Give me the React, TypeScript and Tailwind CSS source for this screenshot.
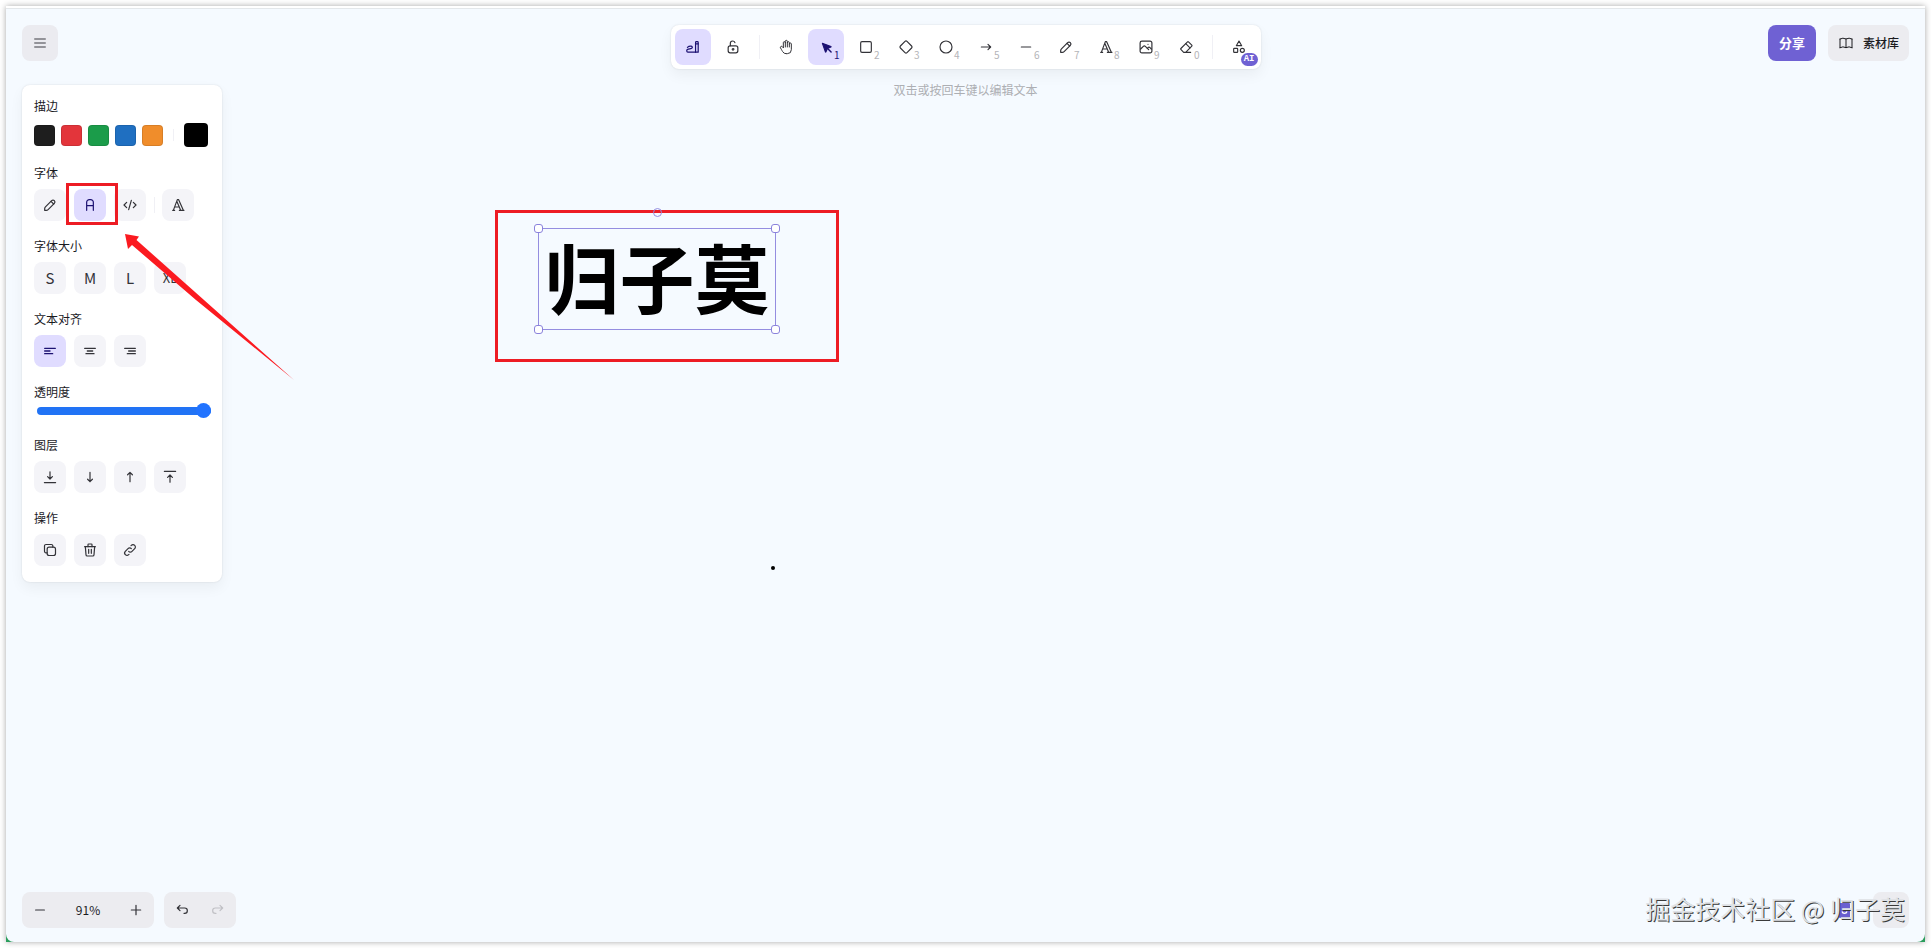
import React, { useState } from 'react';
import type { ReactNode } from 'react';
import clsx from 'clsx';

type IconProps = {
  children: ReactNode;
  box?: number;
  stroke?: number;
  className?: string;
};

function Icon({ children, box = 20, stroke = 1.5, className = 'size-4' }: IconProps) {
  return (
    <svg
      viewBox={`0 0 ${box} ${box}`}
      fill="none"
      stroke="currentColor"
      strokeWidth={stroke}
      strokeLinecap="round"
      strokeLinejoin="round"
      aria-hidden="true"
      className={className}
    >
      {children}
    </svg>
  );
}

const pencilIcon = (
  <Icon>
    <path d="m7.643 15.69 7.774-7.773a2.357 2.357 0 1 0-3.334-3.334L4.31 12.357a3.333 3.333 0 0 0-.977 2.357v1.953h1.953c.884 0 1.732-.352 2.357-.977Z" />
    <path d="m11.25 5.417 3.333 3.333" />
  </Icon>
);

const textIcon = (
  <Icon box={24} stroke={1.75}>
    <path d="M4 20h3M14 20h7M6.9 15h6.9M10.2 6.3 16 20M5 20l6-16h2l7 16" />
  </Icon>
);

const penModeIcon = (
  <Icon>
    <path d="M13.2 4.300a1 1 0 0 1 1-1h1.300a1 1 0 0 1 1 1v12.200h-3.300Z" />
    <path d="M13.200 6h3.300" />
    <path d="M3 10.500c1.500-1.300 3.200-1.700 4.700-1.500 1.800.300 2 2.200.300 2.800-1.700.500-3.500.500-4.800 1.200-1.800 1-1.200 3.500.900 3.500h9.100" />
  </Icon>
);

const lockIcon = (
  <Icon>
    <path d="M13.542 8.542H6.458a2.5 2.5 0 0 0-2.5 2.5v3.75a2.5 2.5 0 0 0 2.5 2.5h7.084a2.5 2.5 0 0 0 2.5-2.5v-3.75a2.5 2.5 0 0 0-2.5-2.5Z" />
    <path d="M10 13.958a1.042 1.042 0 1 0 0-2.083 1.042 1.042 0 0 0 0 2.083Z" />
    <path d="M6.667 8.333V5.400c0-1.600 1.300-2.900 2.916-2.900 1.300 0 2.400.700 2.817 2.100" />
  </Icon>
);

const handIcon = (
  <Icon box={24} stroke={1.5}>
    <path d="M8 13V5.500a1.500 1.500 0 0 1 3 0V12M11 5.500v-2a1.500 1.500 0 1 1 3 0V12M14 5.500a1.500 1.500 0 0 1 3 0V12" />
    <path d="M17 7.500a1.500 1.500 0 0 1 3 0V16a6 6 0 0 1-6 6h-2 .208a6 6 0 0 1-5.012-2.700L7 19c-.312-.479-1.407-2.388-3.286-5.728a1.500 1.500 0 0 1 .536-2.022 1.867 1.867 0 0 1 2.280.280L8 13" />
  </Icon>
);

const tools = [
  {
    name: '选择',
    icon: (
      <Icon box={22}>
        <g fill="currentColor">
          <path d="m6 6 4.153 11.793a.365.365 0 0 0 .331.207.366.366 0 0 0 .332-.207L13 13l4.787-1.994a.355.355 0 0 0 .213-.323.355.355 0 0 0-.213-.323L6 6Z" />
          <path d="m13.500 13.500 4.500 4.500" strokeWidth="2" />
        </g>
      </Icon>
    ),
  },
  {
    name: '矩形',
    icon: (
      <Icon box={24} stroke={1.75}>
        <rect x="4" y="4" width="16" height="16" rx="2" />
      </Icon>
    ),
  },
  {
    name: '菱形',
    icon: (
      <Icon box={24} stroke={1.75}>
        <path d="m10.500 20.400-6.900-6.900c-.781-.781-.781-2.219 0-3l6.900-6.900c.781-.781 2.219-.781 3 0l6.900 6.900c.781.781.781 2.219 0 3l-6.900 6.900c-.781.781-2.219.781-3 0Z" />
      </Icon>
    ),
  },
  {
    name: '椭圆',
    icon: (
      <Icon box={24} stroke={1.75}>
        <circle cx="12" cy="12" r="9" />
      </Icon>
    ),
  },
  {
    name: '箭头',
    icon: (
      <Icon box={24} stroke={1.75}>
        <path d="M5 12h14M15 16l4-4M15 8l4 4" />
      </Icon>
    ),
  },
  {
    name: '线条',
    icon: (
      <Icon>
        <path d="M4.167 10h11.666" />
      </Icon>
    ),
  },
  { name: '自由书写', icon: pencilIcon },
  { name: '文字', icon: textIcon },
  {
    name: '插入图像',
    icon: (
      <Icon>
        <path d="M12.500 6.667h.010" />
        <path d="M4.910 2.625h10.180a2.284 2.284 0 0 1 2.285 2.284v10.182a2.284 2.284 0 0 1-2.284 2.284H4.909a2.284 2.284 0 0 1-2.284-2.284V4.909a2.284 2.284 0 0 1 2.284-2.284Z" />
        <path d="m3.333 12.500 3.334-3.333c.773-.745 1.726-.745 2.500 0l4.166 4.166" />
        <path d="m11.667 11.667.833-.834c.774-.744 1.726-.744 2.500 0l1.667 1.667" />
      </Icon>
    ),
  },
  {
    name: '橡皮',
    icon: (
      <Icon box={24} stroke={1.75}>
        <path d="M19 20H8.500l-4.210-4.300a1 1 0 0 1 0-1.410l10-10a1 1 0 0 1 1.410 0l5 5a1 1 0 0 1 0 1.410L11.500 20" />
        <path d="M18 13.300 11.700 7" />
      </Icon>
    ),
  },
];

const swatches = [
  { name: '黑', color: 'bg-[#1e1e1e]' },
  { name: '红', color: 'bg-[#e3353b]' },
  { name: '绿', color: 'bg-[#1b9c4a]' },
  { name: '蓝', color: 'bg-[#1f6fc1]' },
  { name: '橙', color: 'bg-[#f08d2b]' },
];

const aligns = [
  { name: '左对齐', d: 'M4 8h16M4 12h8M4 16h12' },
  { name: '居中', d: 'M4 8h16M8 12h8M6 16h12' },
  { name: '右对齐', d: 'M4 8h16M10 12h10M8 16h12' },
];

const layers = [
  { name: '置于底层', d: 'M3 17h14M10 3.500v9M7 9.500l3 3 3-3' },
  { name: '下移一层', d: 'M10 4.200v11.600M7 12.800l3 3 3-3' },
  { name: '上移一层', d: 'M10 15.800V4.200M7 7.200l3-3 3 3' },
  { name: '置于顶层', d: 'M3 3h14M10 16.500v-9M7 10.500l3-3 3 3' },
];

const actions = [
  {
    name: '复制',
    paths: [
      'M14.375 6.458H8.958a2.500 2.500 0 0 0-2.500 2.500v5.417a2.500 2.500 0 0 0 2.500 2.500h5.417a2.500 2.500 0 0 0 2.500-2.500V8.958a2.500 2.500 0 0 0-2.500-2.500Z',
      'M6.458 13.542H5a1.870 1.870 0 0 1-1.875-1.875V5A1.870 1.870 0 0 1 5 3.125h6.667A1.870 1.870 0 0 1 13.542 5v1.458',
    ],
  },
  {
    name: '删除',
    paths: [
      'M3.333 5.833h13.334M8.333 9.167v5M11.667 9.167v5',
      'm4.167 5.833.833 10c0 .920.746 1.667 1.667 1.667h6.666c.920 0 1.667-.746 1.667-1.667l.833-10M7.500 5.833v-2.500c0-.460.373-.833.833-.833h3.334c.460 0 .833.373.833.833v2.500',
    ],
  },
  {
    name: '链接',
    paths: [
      'M8.333 11.667a2.917 2.917 0 0 0 4.167 0l3.333-3.334a2.946 2.946 0 1 0-4.166-4.166l-.417.416',
      'M11.667 8.333a2.917 2.917 0 0 0-4.167 0l-3.333 3.334a2.946 2.946 0 0 0 4.166 4.166l.417-.416',
    ],
  },
];

type OptionProps = {
  label: string;
  active?: boolean;
  onClick?: () => void;
  children: ReactNode;
};

function Option({ label, active, onClick, children }: OptionProps) {
  return (
    <button
      type="button"
      aria-label={label}
      onClick={onClick}
      className={clsx(
        'flex size-8 items-center justify-center rounded-lg',
        active ? 'bg-[#e0dcff] text-[#1c1172]' : 'bg-[#f4f4f8] text-[#333338]',
      )}
    >
      {children}
    </button>
  );
}

function Section({ title, children }: { title: string; children: ReactNode }) {
  return (
    <section>
      <h3 className="mb-[7px] leading-[18px]">{title}</h3>
      <div className="flex gap-2">{children}</div>
    </section>
  );
}

function Divider({ className }: { className?: string }) {
  return <div className={clsx('w-px bg-[#f0f0f5]', className)} />;
}

function StylePanel() {
  const [align, setAlign] = useState('左对齐');
  const [opacity, setOpacity] = useState(100);

  return (
    <aside className="flex w-50 flex-col gap-4 rounded-lg bg-white px-3 pt-3 pb-4 text-xs text-[#1b1b1f] shadow-[0_0_2px_rgba(0,0,0,0.12),0_6px_14px_rgba(0,0,0,0.05)]">
      <section>
        <h3 className="mb-[7px] leading-[18px]">描边</h3>
        <div className="flex h-[26px] items-center">
          <div className="flex gap-1.5">
            {swatches.map((s) => (
              <button
                key={s.name}
                type="button"
                aria-label={s.name}
                className={clsx('size-[21px] rounded-sm border border-black/10', s.color)}
              />
            ))}
          </div>
          <Divider className="mx-2.5 h-3" />
          <button type="button" aria-label="当前颜色" className="size-6 rounded-sm bg-black" />
        </div>
      </section>

      <Section title="字体">
        <Option label="手写">{pencilIcon}</Option>
        <div className="relative z-10">
          <Option label="普通" active>
            <Icon>
              <path d="M5.833 16.667v-10a3.333 3.333 0 0 1 3.334-3.334h1.666a3.333 3.333 0 0 1 3.334 3.334v10M5.833 10.833h8.334" />
            </Icon>
          </Option>
          {/* annotation frame around the chosen font */}
          <span className="pointer-events-none absolute -top-1.5 -right-3 -bottom-1 -left-2 border-3 border-[#ed1c24]" />
        </div>
        <Option label="代码">
          <Icon>
            <path d="M5.833 6.667 2.500 10l3.333 3.333M14.167 6.667 17.500 10l-3.333 3.333M11.667 4.167 8.333 15.833" />
          </Icon>
        </Option>
        <Divider className="my-2 -mr-px" />
        <Option label="更多字体">{textIcon}</Option>
      </Section>

      <Section title="字体大小">
        {['S', 'M', 'L', 'XL'].map((size) => (
          <Option key={size} label={size}>
            <span className={size === 'XL' ? 'text-[13px]' : 'text-[15px]'}>{size}</span>
          </Option>
        ))}
      </Section>

      <Section title="文本对齐">
        {aligns.map((a) => (
          <Option
            key={a.name}
            label={a.name}
            active={align === a.name}
            onClick={() => setAlign(a.name)}
          >
            <Icon box={24} stroke={2}>
              <path d={a.d} />
            </Icon>
          </Option>
        ))}
      </Section>

      <section>
        <label htmlFor="opacity" className="block leading-[18px]">
          透明度
        </label>
        <div className="-mr-px flex h-[19px] items-center pl-[3px]">
          <input
            id="opacity"
            type="range"
            min={0}
            max={100}
            value={opacity}
            onChange={(e) => setOpacity(Number(e.target.value))}
            className="h-2 w-full appearance-none rounded-full bg-[#2173f5] [&::-webkit-slider-thumb]:size-[15px] [&::-webkit-slider-thumb]:appearance-none [&::-webkit-slider-thumb]:rounded-full [&::-webkit-slider-thumb]:bg-[#2173ff]"
          />
        </div>
      </section>

      <Section title="图层">
        {layers.map((l) => (
          <Option key={l.name} label={l.name}>
            <Icon>
              <path d={l.d} />
            </Icon>
          </Option>
        ))}
      </Section>

      <Section title="操作">
        {actions.map((a) => (
          <Option key={a.name} label={a.name}>
            <Icon>
              {a.paths.map((d) => (
                <path key={d} d={d} />
              ))}
            </Icon>
          </Option>
        ))}
      </Section>
    </aside>
  );
}

type ToolProps = {
  label: string;
  hotkey?: number;
  active?: boolean;
  onClick?: () => void;
  children: ReactNode;
};

function Tool({ label, hotkey, active, onClick, children }: ToolProps) {
  return (
    <button
      type="button"
      aria-label={label}
      onClick={onClick}
      className={clsx(
        'relative flex size-9 items-center justify-center rounded-lg',
        active ? 'bg-[#e0dcff] text-[#1c1172]' : 'text-[#333338]',
      )}
    >
      {children}
      {hotkey !== undefined && (
        <span
          className={clsx(
            'absolute right-1 bottom-1 text-[10px] leading-3',
            active ? 'text-[#1c1172]' : 'text-[#b4b4b8]',
          )}
        >
          {hotkey}
        </span>
      )}
    </button>
  );
}

function Toolbar() {
  const [tool, setTool] = useState('选择');

  return (
    <div className="flex flex-col items-center">
      <div className="flex gap-1 rounded-lg bg-white p-1 shadow-[0_0_2px_rgba(0,0,0,0.12),0_6px_14px_rgba(0,0,0,0.05)]">
        <Tool label="笔模式" active>
          {penModeIcon}
        </Tool>
        <Tool label="锁定">{lockIcon}</Tool>
        <Divider className="mx-1 my-1.5" />
        <Tool label="抓手">{handIcon}</Tool>
        {tools.map((t, i) => (
          <Tool
            key={t.name}
            label={t.name}
            hotkey={(i + 1) % 10}
            active={tool === t.name}
            onClick={() => setTool(t.name)}
          >
            {t.icon}
          </Tool>
        ))}
        <Divider className="mx-1 my-1.5" />
        <Tool label="更多工具">
          <Icon box={24} stroke={1.75}>
            <path d="m12 3-4 7h8Z" />
            <circle cx="17" cy="17" r="3" />
            <rect x="4" y="14" width="6" height="6" rx="1" />
          </Icon>
          <span className="absolute -right-px -bottom-px flex h-[13px] items-center rounded-full bg-[#6f61d3] px-[3px] font-['Liberation_Mono',monospace] text-[9px] font-bold text-white">
            AI
          </span>
        </Tool>
      </div>
      <p className="mt-3 text-xs leading-[18px] text-[#adafb3]">双击或按回车键以编辑文本</p>
    </div>
  );
}

function Canvas() {
  return (
    <div className="absolute inset-0">
      <div className="absolute top-[202px] left-[489px] h-[152px] w-[344px] border-[3px] border-[#ed1c24]" />
      <div className="absolute top-[220px] left-[532px] flex h-[102px] w-[238px] items-start justify-center border border-[#948de0]">
        <span className="text-[75px] leading-[94px] font-bold whitespace-nowrap text-black">
          归子莫
        </span>
        <span className="absolute -top-[21px] left-[114px] size-[9px] rounded-full border border-[#948de0]" />
        <span className="absolute -top-[5px] -left-[5px] size-[9px] rounded-[3px] border border-[#8a82dc] bg-white" />
        <span className="absolute -top-[5px] -right-[5px] size-[9px] rounded-[3px] border border-[#8a82dc] bg-white" />
        <span className="absolute -bottom-[5px] -left-[5px] size-[9px] rounded-[3px] border border-[#8a82dc] bg-white" />
        <span className="absolute -right-[5px] -bottom-[5px] size-[9px] rounded-[3px] border border-[#8a82dc] bg-white" />
      </div>
      <span className="absolute top-[558px] left-[765px] size-1 rounded-full bg-black" />
    </div>
  );
}

function Footer() {
  const iconButton = 'flex size-9 items-center justify-center text-[#333338]';

  return (
    <footer className="flex items-center justify-between text-xs">
      <div className="flex gap-2.5">
        <div className="flex h-9 items-center rounded-lg bg-[#ececf0]">
          <button type="button" aria-label="缩小" className={iconButton}>
            <Icon>
              <path d="M4.500 10h11" />
            </Icon>
          </button>
          <button type="button" className="w-15 text-[#1b1b1f]">
            91%
          </button>
          <button type="button" aria-label="放大" className={iconButton}>
            <Icon>
              <path d="M10 4.167v11.666M4.167 10h11.666" />
            </Icon>
          </button>
        </div>
        <div className="flex h-9 items-center rounded-lg bg-[#ececf0]">
          <button type="button" aria-label="撤销" className={iconButton}>
            <Icon>
              <path d="M7.500 10.833 4.167 7.500 7.500 4.167M4.167 7.500h9.166a3.333 3.333 0 0 1 0 6.667H12.500" />
            </Icon>
          </button>
          <button
            type="button"
            aria-label="重做"
            disabled
            className="flex size-9 items-center justify-center text-[#c0c0c5]"
          >
            <Icon>
              <path d="M12.500 10.833 15.833 7.500 12.500 4.167M15.833 7.500H6.667a3.333 3.333 0 1 0 0 6.667H7.500" />
            </Icon>
          </button>
        </div>
      </div>
      <div className="flex items-center gap-[23px]">
        <svg viewBox="0 0 11 15" className="h-[15px] w-[11px]" aria-hidden="true">
          <rect width="11" height="15" rx="1" fill="#6a5fd0" />
          <path d="M3 8.500a2.600 2.600 0 0 0 5 0" fill="none" stroke="#fff" strokeWidth="1.300" />
        </svg>
        <button type="button" aria-label="帮助" className="size-9 rounded-lg bg-[#ececf0]" />
      </div>
    </footer>
  );
}

function App() {
  return (
    <div className="h-screen min-h-[700px] bg-white p-1.5 font-['Noto_Sans_CJK_SC','Noto_Sans',sans-serif]">
      <div className="relative h-full bg-[#2a9d5c] shadow-[0_0_6px_rgba(0,0,0,0.35)]">
        <div className="relative flex h-full flex-col justify-between overflow-hidden rounded-b-lg border-t-2 border-white bg-[#f5faff] px-4 pb-3.5">
          <Canvas />
          <div className="absolute inset-x-0 top-0 h-px bg-[#e3e7ea]" />

          <div className="relative grid grid-cols-[1fr_auto_1fr] items-start pt-[17px]">
            <div className="flex flex-col items-start gap-6">
              <button
                type="button"
                aria-label="菜单"
                className="flex size-9 items-center justify-center rounded-lg bg-[#ebebf0] text-[#77777c]"
              >
                <Icon stroke={2}>
                  <path d="M3.500 5h13M3.500 10h13M3.500 15h13" />
                </Icon>
              </button>
              <StylePanel />
            </div>

            <Toolbar />

            <div className="flex justify-end gap-3">
              <button
                type="button"
                className="h-9 rounded-lg bg-[#6f61d3] px-[11px] text-[13px] font-bold text-white"
              >
                分享
              </button>
              <button
                type="button"
                className="flex h-9 items-center gap-[9px] rounded-lg bg-[#ececf0] px-2.5 text-xs font-medium text-[#1b1b1f]"
              >
                <Icon box={24} stroke={1.5}>
                  <path d="M3 19a9 9 0 0 1 9 0 9 9 0 0 1 9 0M3 6a9 9 0 0 1 9 0 9 9 0 0 1 9 0M3 6v13M12 6v13M21 6v13" />
                </Icon>
                素材库
              </button>
            </div>
          </div>

          <div className="relative">
            <Footer />
          </div>
        </div>

        {/* annotation arrow pointing at the font picker */}
        <svg
          viewBox="0 0 172 150"
          className="pointer-events-none absolute top-[227px] left-[118px] h-[150px] w-[172px]"
          aria-hidden="true"
        >
          <path d="M1 1 15 3.500 12.500 7 80 67 170 147 72 67 8 12 4 16Z" fill="#fb1a20" />
        </svg>

        <p className="pointer-events-none absolute right-5 bottom-4 text-[25px] leading-9 whitespace-nowrap text-[#dfe2e6] [text-shadow:1px_1px_0_#3a3a3a]">
          掘金技术社区 @ 归子莫
        </p>
      </div>
    </div>
  );
}

export default App;
